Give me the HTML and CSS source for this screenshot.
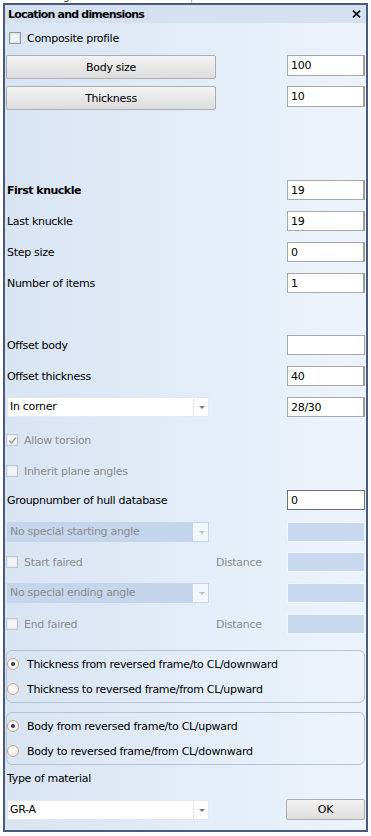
FILE: index.html
```html
<!DOCTYPE html>
<html lang="en">
<head>
    <meta charset="UTF-8">
    <meta name="viewport" content="width=device-width, initial-scale=1.0">
    <title>Location and dimensions</title>
    <link rel="stylesheet" href="styles.css">
</head>
<body>
    <div class="menu-strip">
        <div class="menu-items">
            <span>ckness</span><span>Angles</span><span>Profiles</span><span>Holes</span><span class="sep">|</span><span>Information</span><span>Remove</span><span>Hull view</span>
        </div>
    </div>

    <div class="dialog">
        <div class="titlebar">
            <span class="title">Location and dimensions</span>
            <svg class="close" width="9" height="8" viewBox="0 0 9 8"><path d="M1 0.6 L8 7.4 M8 0.6 L1 7.4" stroke="#111" stroke-width="1.7"/></svg>
        </div>

        <div class="content">
            <div class="row row-composite">
                <span class="checkbox"></span><span>Composite profile</span>
            </div>
            <div class="row row-btn mt-7">
                <button class="btn">Body size</button>
                <input class="field tall" type="text" value="100">
            </div>
            <div class="row row-btn mt-7">
                <button class="btn">Thickness</button>
                <input class="field tall" type="text" value="10">
            </div>

            <div class="row mt-70">
                <span class="label bold">First knuckle</span>
                <input class="field" type="text" value="19">
            </div>
            <div class="row">
                <span class="label">Last knuckle</span>
                <input class="field" type="text" value="19">
            </div>
            <div class="row">
                <span class="label">Step size</span>
                <input class="field" type="text" value="0">
            </div>
            <div class="row">
                <span class="label">Number of items</span>
                <input class="field" type="text" value="1">
            </div>

            <div class="row mt-42">
                <span class="label">Offset body</span>
                <input class="field thin" type="text" value="">
            </div>
            <div class="row">
                <span class="label">Offset thickness</span>
                <input class="field" type="text" value="40">
            </div>
            <div class="row">
                <div class="select"><span class="select-text">In corner</span><span class="select-arrow"></span></div>
                <input class="field" type="text" value="28/30">
            </div>

            <div class="row mt-13">
                <span class="checkbox off checked">
                    <svg width="9" height="9" viewBox="0 0 9 9"><path d="M1.2 4.6 L3.6 7 L7.8 1.6" fill="none" stroke="#9a9a9a" stroke-width="1.5"/></svg>
                </span>
                <span class="label dim flex1">Allow torsion</span>
            </div>
            <div class="row">
                <span class="checkbox off"></span>
                <span class="label dim flex1">Inherit plane angles</span>
            </div>

            <div class="row mt-9">
                <span class="label">Groupnumber of hull database</span>
                <input class="field focus thin" type="text" value="0">
            </div>
            <div class="row mt-12">
                <div class="select disabled"><span class="select-text">No special starting angle</span><span class="select-arrow"></span></div>
                <input class="field disabled" type="text" value="" disabled>
            </div>
            <div class="row mt-10">
                <span class="checkbox off"></span>
                <span class="label dim flex1">Start faired</span>
                <span class="distance">Distance</span>
                <input class="field disabled" type="text" value="" disabled>
            </div>
            <div class="row">
                <div class="select disabled"><span class="select-text">No special ending angle</span><span class="select-arrow"></span></div>
                <input class="field disabled" type="text" value="" disabled>
            </div>
            <div class="row">
                <span class="checkbox off"></span>
                <span class="label dim flex1">End faired</span>
                <span class="distance">Distance</span>
                <input class="field disabled" type="text" value="" disabled>
            </div>

            <div class="group mt-16">
                <div class="option"><span class="radio checked"></span><span>Thickness from reversed frame/to CL/downward</span></div>
                <div class="option"><span class="radio"></span><span>Thickness to reversed frame/from CL/upward</span></div>
            </div>
            <div class="group mt-9">
                <div class="option"><span class="radio checked"></span><span>Body from reversed frame/to CL/upward</span></div>
                <div class="option"><span class="radio"></span><span>Body to reversed frame/from CL/downward</span></div>
            </div>

            <div class="row mt-3">
                <span class="label">Type of material</span>
            </div>
            <div class="row row-bottom">
                <div class="select"><span class="select-text">GR-A</span><span class="select-arrow"></span></div>
                <button class="btn ok">OK</button>
            </div>
        </div>
    </div>
</body>
</html>
```

FILE: styles.css
```css
* {
    box-sizing: border-box;
}
body {
    margin: 0;
    background: #fff;
    font-family: "DejaVu Sans", Verdana, sans-serif;
    font-size: 11px;
    letter-spacing: -0.3px;
    color: #000;
}

/* bit of the host window's menu peeking out above the dialog */
.menu-strip {
    height: 3px;
    overflow: hidden;
    background: #fff;
}
.menu-items {
    display: flex;
    gap: 13px;
    margin-top: -9px;
    line-height: 12px;
    white-space: nowrap;
    color: #333;
}
.menu-items .sep {
    color: #999;
}

.dialog {
    margin-left: 3px;
    width: 365px;
    height: 829px;
    border: 2px solid #4a5a79;
    display: flex;
    flex-direction: column;
}
.titlebar {
    height: 18px;
    flex: none;
    display: flex;
    align-items: center;
    justify-content: space-between;
    padding: 0 5px 0 3px;
    background: #d5e1f1;
}
.title {
    font-weight: bold;
    letter-spacing: -0.8px;
}
.close {
    display: block;
}
.content {
    flex: 1;
    padding: 5px 1px 0 1px;
    background: linear-gradient(to right, #d9e4f3, #ecf3fc);
}

.row {
    display: flex;
    align-items: center;
    justify-content: space-between;
    height: 20px;
    margin-top: 11px;
}
.row-composite {
    margin-top: 0;
    justify-content: flex-start;
    gap: 6px;
    padding-left: 3px;
}
.row-btn {
    height: 24px;
    align-items: flex-start;
}
.row-bottom {
    height: 21px;
}
.mt-3 { margin-top: 3px; }
.mt-7 { margin-top: 7px; }
.mt-9 { margin-top: 9px; }
.mt-10 { margin-top: 10px; }
.mt-12 { margin-top: 12px; }
.mt-13 { margin-top: 13px; }
.mt-16 { margin-top: 16px; }
.mt-42 { margin-top: 42px; }
.mt-70 { margin-top: 70px; }

.label {
    padding-left: 1px;
}
.bold {
    font-weight: bold;
    letter-spacing: -0.5px;
}
.dim {
    color: #8c8c8c;
}
.flex1 {
    flex: 1;
    padding-left: 6px;
}
.distance {
    width: 71px;
    color: #8c8c8c;
}

.btn {
    width: 210px;
    height: 24px;
    padding: 0;
    font-family: inherit;
    font-size: 11px;
    letter-spacing: -0.3px;
    color: #000;
    background: linear-gradient(#f3f3f3, #dddddd);
    border: 1px solid #acacac;
    border-radius: 2px;
}
.btn.ok {
    width: 79px;
    height: 21px;
    margin-top: -1px;
}

.field {
    width: 78px;
    height: 20px;
    padding: 0 0 0 3px;
    font-family: inherit;
    font-size: 11px;
    letter-spacing: -0.3px;
    color: #000;
    background: #fff;
    border: 1px solid #a9a9a9;
    border-right: 2px solid #9c9c9c;
    outline: none;
}
.field.tall {
    height: 21px;
}
.field.thin {
    border-right-width: 1px;
}
.field.focus {
    border-color: #727272;
}
.field.disabled {
    background: #c8d8ee;
    border: 1px solid #f2f6fb;
}

.select {
    display: flex;
    width: 202px;
    height: 20px;
    margin-left: 1px;
    background: #fff;
    border: 1px solid #e4e9f0;
}
.select-text {
    flex: 1;
    padding-left: 2px;
    line-height: 18px;
}
.select-arrow {
    width: 15px;
    border-left: 1px solid #e4e8ee;
    position: relative;
}
.select-arrow::after {
    content: "";
    position: absolute;
    left: 5px;
    top: 8px;
    border-left: 3px solid transparent;
    border-right: 3px solid transparent;
    border-top: 3px solid #7a7a7a;
}
.select.disabled {
    background: #c4d5ec;
    border-color: #c4d5ec;
    color: #8c8c8c;
}
.select.disabled .select-arrow {
    background: #f3f6fa;
    border-left-color: #f3f6fa;
}
.select.disabled .select-arrow::after {
    border-top-color: #c0c4ca;
}

.checkbox {
    width: 12px;
    height: 12px;
    flex: none;
    display: flex;
    align-items: center;
    justify-content: center;
    background: #f3f4f6;
    border: 1px solid #8e97a4;
    box-shadow: inset 0 0 0 1px #dde1e6;
}
.checkbox.off {
    margin-left: 0;
    background: #f1f3f6;
    border-color: #c2c7cf;
    box-shadow: inset 0 0 0 1px #e7eaee;
}

.group {
    display: flex;
    flex-direction: column;
    gap: 5px;
    height: 53px;
    padding-top: 3px;
    border: 1px solid #b7c2d3;
    border-radius: 6px;
}
.option {
    display: flex;
    align-items: center;
    gap: 8px;
    height: 20px;
}
.radio {
    width: 12px;
    height: 12px;
    flex: none;
    border-radius: 50%;
    border: 1px solid #c9a888;
    background: radial-gradient(circle at 40% 40%, #ffffff, #ece7e2);
    position: relative;
}
.radio.checked::after {
    content: "";
    position: absolute;
    left: 3px;
    top: 3px;
    width: 4px;
    height: 4px;
    border-radius: 50%;
    background: #2f3a52;
}
```
